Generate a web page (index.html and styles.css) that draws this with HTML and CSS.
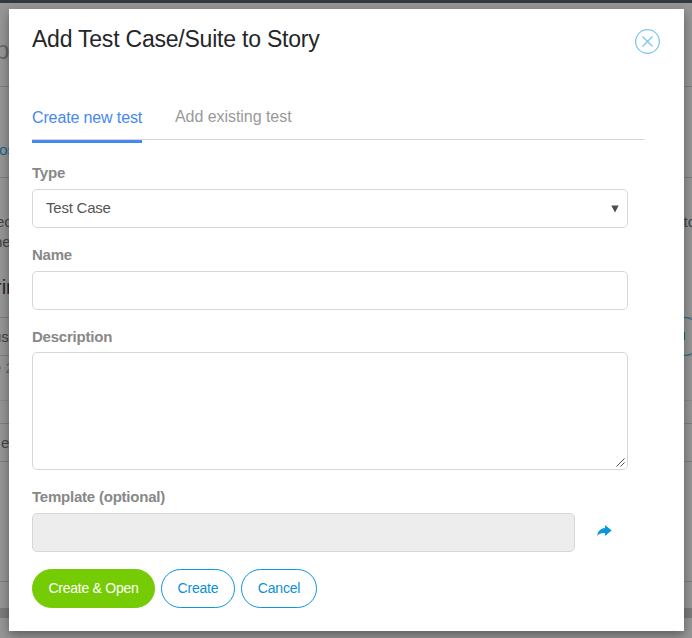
FILE: index.html
```html
<!DOCTYPE html>
<html lang="en">
<head>
<meta charset="utf-8">
<title>Add Test Case/Suite to Story</title>
<link rel="stylesheet" href="styles.css">
</head>
<body>
<div class="page" aria-hidden="true">
  <div class="topbar"></div>
  <div class="row row-title"><span class="peek-title">p</span></div>
  <div class="row row-link"><span class="peek-link">os</span></div>
  <div class="row row-text">
    <div class="lines"><span>ec</span><span>ne</span><strong>rin</strong></div>
    <span class="peek-to">to</span>
  </div>
  <div class="row row-user"><span>us</span></div>
  <div class="row row-date"><span><i>e</i> 2</span></div>
  <div class="row row-gap"></div>
  <div class="row row-cell"><span>e</span></div>
  <div class="row row-blank"></div>
  <div class="scroll-track"></div>
  <div class="round-button"><i></i></div>
</div>
<main class="modal">
  <header class="modal-header">
    <h1>Add Test Case/Suite to Story</h1>
    <button class="close" aria-label="Close">
      <svg width="25" height="25" viewBox="0 0 25 25"><circle cx="12.500" cy="12.500" r="11.900"/><path d="M7.500 7.500l10 10M17.500 7.500l-10 10"/></svg>
    </button>
  </header>
  <nav class="tabs">
    <a class="tab active">Create new test</a>
    <a class="tab">Add existing test</a>
  </nav>
  <form class="form">
    <label>Type</label>
    <div class="field select"><span>Test Case</span><svg width="8" height="8" viewBox="0 0 8 8"><path d="M.3 .5h7.400L4 7.500z"/></svg></div>
    <label>Name</label>
    <div class="field"></div>
    <label>Description</label>
    <div class="field area"><svg width="9" height="9" viewBox="0 0 9 9"><path d="M.5 8.500l8-8M4.500 8.500l4-4"/></svg></div>
    <label>Template (optional)</label>
    <div class="template">
      <div class="field disabled"></div>
      <svg width="15" height="12" viewBox="0 0 15 12"><path d="M8 0l6.700 5.500L8 11V8C4.500 7.700 2 8.500.3 11 .5 6.500 3.500 3.300 8 3z"/></svg>
    </div>
    <div class="actions">
      <button type="button" class="btn primary">Create &amp; Open</button>
      <button type="button" class="btn create">Create</button>
      <button type="button" class="btn cancel">Cancel</button>
    </div>
  </form>
</main>
</body>
</html>
```
FILE: styles.css
```css
* { box-sizing: border-box; }
body {
  margin: 0;
  width: 692px;
  height: 638px;
  overflow: hidden;
  position: relative;
  font-family: "Liberation Sans", Arial, sans-serif;
  background: #969696;
}
.page { height: 638px; font-size: 15px; color: #444; }
.topbar { height: 3px; background: #303a41; }
.row {
  display: flex;
  justify-content: space-between;
  border-bottom: 1px solid #7e7e7e;
  white-space: nowrap;
}
.row-title { height: 84px; padding-top: 32px; }
.peek-title { margin-left: -5px; font-size: 26px; color: #666; }
.row-link { height: 91px; padding-top: 54px; }
.peek-link { margin-left: -1px; font-size: 15.5px; color: #1b6486; }
.row-text { height: 140px; padding-top: 34px; }
.lines { display: flex; flex-direction: column; margin-left: -6px; line-height: 20px; }
.lines span:first-child { margin-left: 2px; }
.lines strong { font-size: 20px; font-weight: 400; line-height: 24px; margin: 23px 0 0 1px; color: #292929; }
.peek-to { margin-right: -4px; line-height: 20px; }
.row-user { height: 38px; padding-top: 10px; }
.row-user span { margin-left: -7px; }
.row-date { height: 45px; padding-top: 3px; border-color: #8a8a8a; }
.row-date span { margin-left: -7px; color: #666; }
.row-date i { font-style: normal; color: #466f96; }
.row-gap { height: 23px; }
.row-cell { height: 38px; padding: 10px 0 0 1px; }
.row-blank { height: 120px; }
.scroll-track { height: 10px; margin-top: 26px; background: #7b7b7b; }
.round-button {
  position: absolute;
  left: 664px;
  top: 317px;
  width: 39px;
  height: 39px;
  border: 1px solid #1b6486;
  border-radius: 50%;
}
.round-button i { display: block; width: 2px; height: 8px; margin: 14px 0 0 18px; background: #1b6486; }
.modal {
  position: absolute;
  left: 9px;
  top: 9px;
  width: 675px;
  height: 622px;
  padding: 15px 24px 0 23px;
  background: #fff;
  box-shadow: 0 4px 10px rgba(0, 0, 0, .38);
}
.modal-header { display: flex; justify-content: space-between; height: 78px; }
h1 { margin: 0; font-size: 23px; line-height: 30px; font-weight: 400; letter-spacing: -.22px; color: #252628; }
.close { width: 25px; height: 25px; padding: 0; border: 0; background: none; margin-top: 5px; }
.close svg { display: block; fill: none; stroke: #7cc6ed; stroke-width: 1.300; }
.tabs {
  display: flex;
  gap: 33px;
  width: 613px;
  height: 38px;
  border-top-right-radius: 4px;
  border-bottom: 1px solid #d7d7d7;
}
.tab { height: 38px; padding-top: 5px; font-size: 16px; line-height: 20px; letter-spacing: -.05px; color: #999; }
.tab.active { height: 41px; padding-top: 6px; width: 110px; white-space: nowrap; letter-spacing: -.13px; color: #4688f1; border-bottom: 3px solid #4688f1; }
.form { width: 596px; display: flex; flex-direction: column; }
label { height: 18px; margin: 24px 0 7px; font-size: 15px; line-height: 18px; font-weight: 700; letter-spacing: -.22px; color: #888; }
.field { height: 39px; flex-shrink: 0; border: 1px solid #d7d7d7; border-radius: 5px; background: #fff; }
.field + label { margin-top: 18px; }
.select { display: flex; justify-content: space-between; align-items: center; padding: 0 8px 2px 13px; font-size: 15px; letter-spacing: -.22px; color: #555; }
.select svg { fill: #4c4c4c; margin-top: 3px; }
.area { height: 118px; display: flex; align-items: flex-end; justify-content: flex-end; padding: 2px; margin-top: -1px; }
.area svg { fill: none; stroke: #555; stroke-width: 1; }
.template { display: flex; align-items: center; gap: 22px; }
.disabled { width: 543px; background: #ededed; }
.template svg { fill: #0c97dd; margin-top: -3px; }
.actions { display: flex; gap: 6px; margin-top: 17px; }
.btn {
  height: 39px;
  padding: 0 0 2px;
  border: 1px solid #0c97dd;
  border-radius: 20px;
  background: #fff;
  color: #0c8fd5;
  font: 14px "Liberation Sans", Arial, sans-serif;
  letter-spacing: -.2px;
}
.primary { width: 123px; border-color: #76cc04; background: #76cc04; color: #fff; letter-spacing: -.25px; }
.create { width: 74px; }
.cancel { width: 76px; }
```
